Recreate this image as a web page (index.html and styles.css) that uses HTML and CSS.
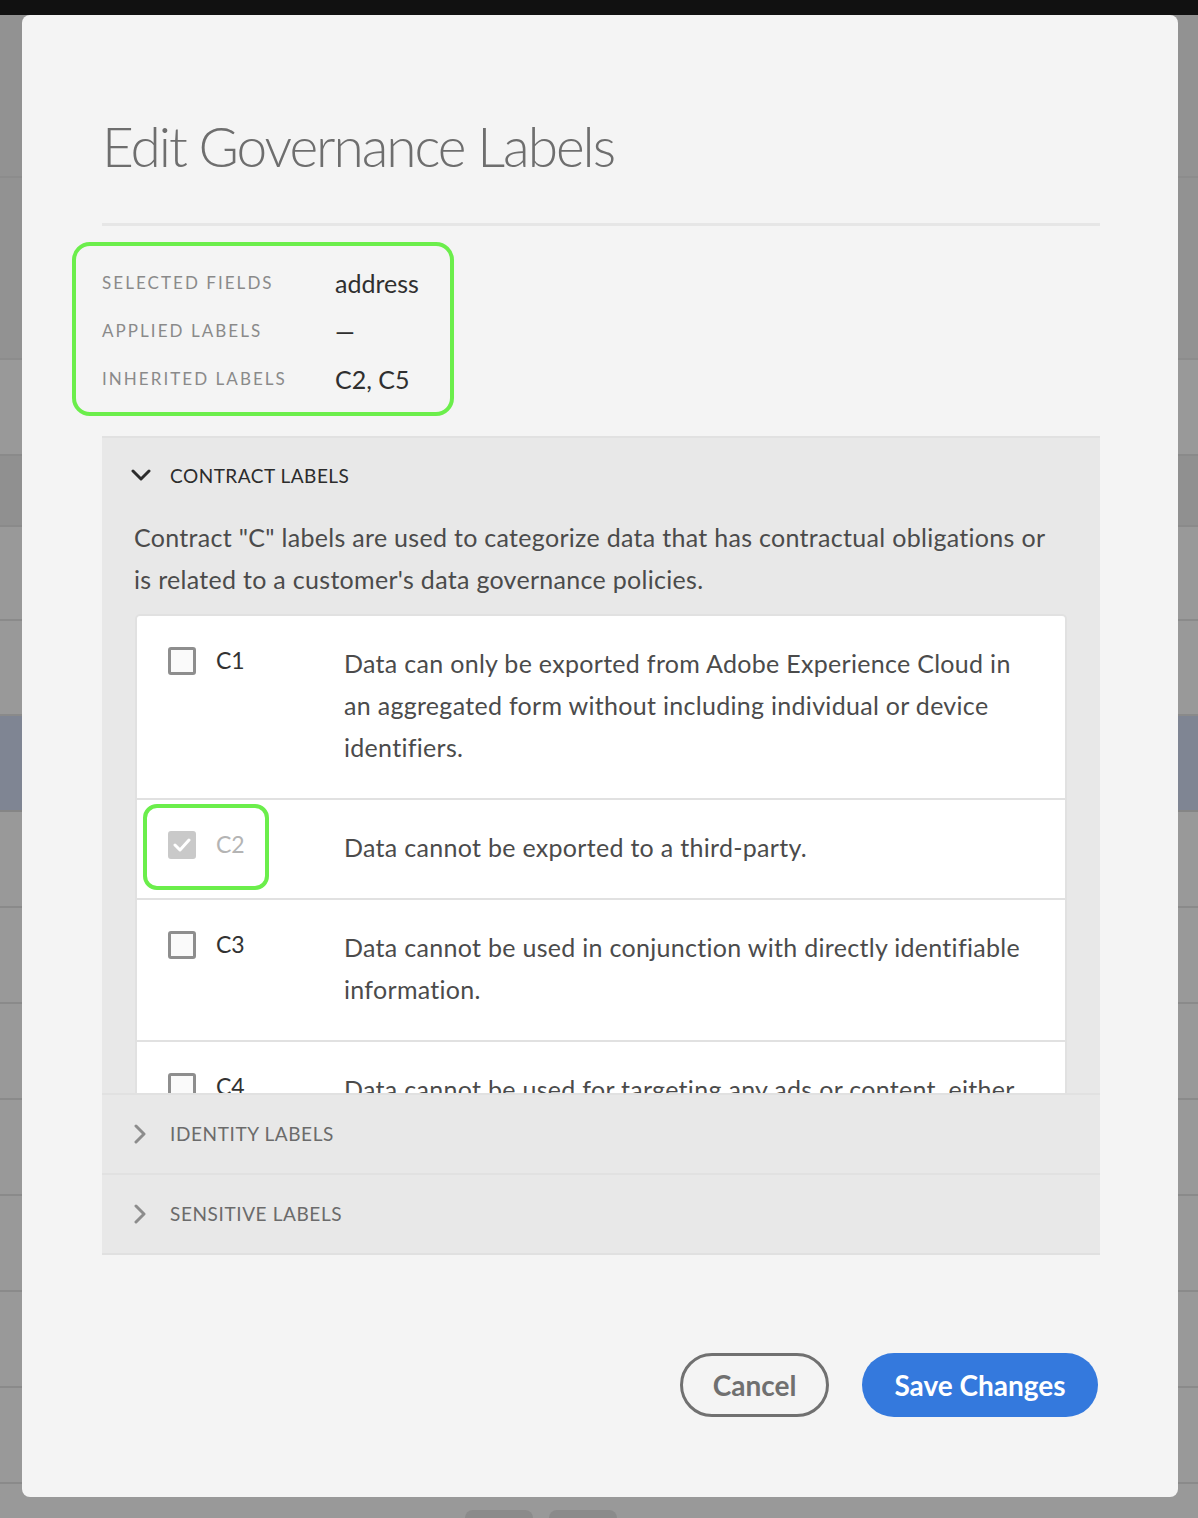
FILE: index.html
```html
<!DOCTYPE html>
<html lang="en">
<head>
<meta charset="utf-8">
<title>Edit Governance Labels</title>
<link rel="stylesheet" href="styles.css">
</head>
<body>
<div class="page">
  <div class="topbar"></div>
  <div class="backdrop">
    <div class="brow h163 dark"></div>
    <div class="brow h182 dark"></div>
    <div class="brow h96"></div>
    <div class="brow h71 dark2"></div>
    <div class="brow h94"></div>
    <div class="brow h95"></div>
    <div class="brow h96 blue"></div>
    <div class="brow h96"></div>
    <div class="brow h96"></div>
    <div class="brow h96"></div>
    <div class="brow h96"></div>
    <div class="brow h96"></div>
    <div class="brow h96"></div>
    <div class="brow h96"></div>
    <div class="brow last">
      <span class="pill"></span><span class="pill"></span>
    </div>
  </div>

  <div class="dialog">
    <h1 class="title">Edit Governance Labels</h1>
    <div class="divider"></div>

    <div class="meta">
      <div class="meta-row"><span class="meta-label">SELECTED FIELDS</span><span class="meta-value">address</span></div>
      <div class="meta-row"><span class="meta-label">APPLIED LABELS</span><span class="meta-value">—</span></div>
      <div class="meta-row"><span class="meta-label">INHERITED LABELS</span><span class="meta-value">C2, C5</span></div>
    </div>

    <div class="accordion">
      <div class="acc-item open">
        <div class="acc-head">
          <svg class="chev" width="20" height="13" viewBox="0 0 20 13"><polyline points="2,2 10,10 18,2" fill="none" stroke="#2c2c2c" stroke-width="3" stroke-linecap="round" stroke-linejoin="round"/></svg>
          <span class="acc-title">CONTRACT LABELS</span>
        </div>
        <div class="acc-body">
          <p class="acc-desc">Contract "C" labels are used to categorize data that has contractual obligations or is related to a customer's data governance policies.</p>
          <div class="table">
            <div class="trow">
              <span class="cb"></span>
              <span class="lbl">C1</span>
              <span class="desc">Data can only be exported from Adobe Experience Cloud in an aggregated form without including individual or device identifiers.</span>
            </div>
            <div class="trow">
              <div class="mark"></div>
              <span class="cb checked"><svg width="18" height="14" viewBox="0 0 18 14"><polyline points="2,7 7,12 16,2" fill="none" stroke="#fff" stroke-width="3" stroke-linecap="round" stroke-linejoin="round"/></svg></span>
              <span class="lbl disabled">C2</span>
              <span class="desc">Data cannot be exported to a third-party.</span>
            </div>
            <div class="trow">
              <span class="cb"></span>
              <span class="lbl">C3</span>
              <span class="desc">Data cannot be used in conjunction with directly identifiable information.</span>
            </div>
            <div class="trow">
              <span class="cb"></span>
              <span class="lbl">C4</span>
              <span class="desc">Data cannot be used for targeting any ads or content, either on-site or cross-site.</span>
            </div>
          </div>
        </div>
      </div>
      <div class="acc-item">
        <div class="acc-head">
          <svg class="chev-r" width="14" height="20" viewBox="0 0 14 20"><polyline points="3,2 11,10 3,18" fill="none" stroke="#8c8c8c" stroke-width="3" stroke-linecap="round" stroke-linejoin="round"/></svg>
          <span class="acc-title muted">IDENTITY LABELS</span>
        </div>
      </div>
      <div class="acc-item">
        <div class="acc-head">
          <svg class="chev-r" width="14" height="20" viewBox="0 0 14 20"><polyline points="3,2 11,10 3,18" fill="none" stroke="#8c8c8c" stroke-width="3" stroke-linecap="round" stroke-linejoin="round"/></svg>
          <span class="acc-title muted">SENSITIVE LABELS</span>
        </div>
      </div>
    </div>

    <div class="actions">
      <button class="btn cancel">Cancel</button>
      <button class="btn save">Save Changes</button>
    </div>
  </div>
</div>
</body>
</html>
```

FILE: styles.css
```css
* { box-sizing: border-box; }
html, body { margin: 0; padding: 0; }
body {
  width: 1198px;
  height: 1518px;
  overflow: hidden;
  font-family: Lato, "Open Sans", sans-serif;
  background: #999;
}
.page { position: relative; width: 1198px; height: 1518px; }
.topbar { height: 15px; background: #111; }
.backdrop { display: flex; flex-direction: column; }
.brow { background: #999; border-bottom: 2px solid #8a8a8a; }
.brow.dark { background: #929292; border-bottom-color: #8c8c8c; }
.brow.dark2 { background: #909090; }
.brow.blue { background: #7f8593; border-bottom-color: #858585; }
.h163 { height: 163px; }
.h182 { height: 182px; }
.h96 { height: 96px; }
.h95 { height: 95px; }
.h94 { height: 94px; }
.h71 { height: 71px; }
.brow.last { height: 40px; border-bottom: 0; display: flex; gap: 16px; padding-left: 465px; padding-top: 26px; }
.pill { width: 68px; height: 20px; border-radius: 8px; background: #8b8b8b; }

.dialog {
  position: absolute;
  left: 22px;
  top: 15px;
  width: 1156px;
  height: 1482px;
  background: #f4f4f4;
  border-radius: 8px;
  padding: 0 78px 0 80px;
}
.title {
  margin: 99px 0 0 0;
  font-weight: 300;
  font-size: 55px;
  letter-spacing: -2.05px;
  line-height: 64px;
  color: #6e6e6e;
}
.divider { margin-top: 45px; height: 3px; background: #e6e6e6; }

.meta {
  margin: 16px 0 0 -30px;
  width: 382px;
  border: 4px solid #6bee4b;
  border-radius: 18px;
  padding: 12px 0 10px 26px;
}
.meta-row { display: flex; align-items: center; height: 48px; }
.meta-label {
  width: 233px;
  font-size: 17px;
  letter-spacing: 2.05px;
  color: #8a8a8a;
}
.meta-value { font-size: 25px; color: #2f2f2f; padding-top: 1px; }

.accordion {
  margin-top: 20px;
  background: #e8e8e8;
  border-bottom: 2px solid #e0e0e0;
}
.acc-item { border-top: 2px solid #e1e1e1; }
.acc-head {
  height: 78px;
  display: flex;
  align-items: center;
  padding-left: 29px;
  padding-bottom: 3px;
}
.acc-item + .acc-item .acc-head { padding-bottom: 1px; }
.chev { margin-right: 19px; }
.chev-r { margin-left: 2px; margin-right: 23px; }
.acc-title { font-size: 19px; letter-spacing: 0.5px; color: #2c2c2c; }
.acc-title.muted { color: #6b6b6b; letter-spacing: 0.6px; }
.acc-body { height: 577px; overflow: hidden; padding: 0 33px 0 32px; }
.acc-desc {
  margin: 0 0 14px 0;
  font-size: 25px;
  letter-spacing: 0.3px;
  line-height: 42px;
  color: #4b4b4b;
}
.table {
  margin-left: 1px;
  background: #fff;
  border: 2px solid #e1e1e1;
  border-radius: 5px 5px 0 0;
}
.trow {
  position: relative;
  display: flex;
  align-items: flex-start;
  padding: 26px 30px 30px 31px;
  border-bottom: 2px solid #e1e1e1;
}
.cb {
  flex: none;
  width: 28px;
  height: 28px;
  margin-top: 5px;
  border: 3px solid #8e8e8e;
  border-radius: 3px;
  background: #fafafa;
  display: flex;
  align-items: center;
  justify-content: center;
}
.cb.checked { background: #c9c9c9; border-color: #c9c9c9; }
.lbl {
  flex: none;
  width: 128px;
  margin-left: 20px;
  font-size: 23px;
  line-height: 36px;
  color: #323232;
}
.lbl.disabled { color: #b4b4b4; }
.desc {
  flex: 1;
  font-size: 25px;
  letter-spacing: 0.3px;
  line-height: 42px;
  color: #4b4b4b;
}
.mark {
  position: absolute;
  left: 6px;
  top: 4px;
  width: 126px;
  height: 86px;
  border: 4px solid #6bee4b;
  border-radius: 14px;
}

.actions {
  margin-top: 98px;
  display: flex;
  justify-content: flex-end;
  gap: 33px;
  padding-right: 2px;
}
.btn {
  height: 64px;
  border-radius: 32px;
  font-family: Lato, "Open Sans", sans-serif;
  font-weight: 700;
  font-size: 28px;
  padding: 0;
}
.cancel {
  width: 149px;
  background: transparent;
  border: 3px solid #707070;
  color: #707070;
}
.save {
  width: 236px;
  background: #3479dd;
  border: 0;
  color: #fff;
}
```
